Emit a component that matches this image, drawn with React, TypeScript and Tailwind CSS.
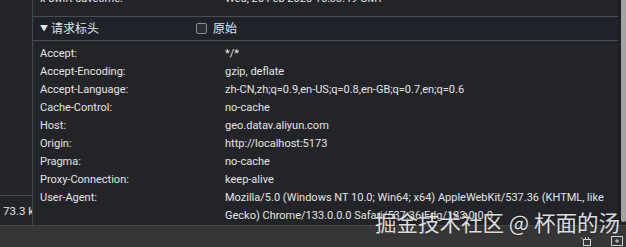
import React from "react";

const rows: [string, React.ReactNode][] = [
  ["Accept:", "*/*"],
  ["Accept-Encoding:", "gzip, deflate"],
  ["Accept-Language:", "zh-CN,zh;q=0.9,en-US;q=0.8,en-GB;q=0.7,en;q=0.6"],
  ["Cache-Control:", "no-cache"],
  ["Host:", "geo.datav.aliyun.com"],
  ["Origin:", "http://localhost:5173"],
  ["Pragma:", "no-cache"],
  ["Proxy-Connection:", "keep-alive"],
  [
    "User-Agent:",
    <>
      Mozilla/5.0 (Windows NT 10.0; Win64; x64) AppleWebKit/537.36 (KHTML, like
      <br />
      Gecko) Chrome/133.0.0.0 Safari/537.36 Edg/133.0.0.0
    </>,
  ],
];

export default function App() {
  return (
    <div
      className="relative w-[626px] h-[247px] overflow-hidden bg-[#222428] text-[#e4e4e4] text-[11px] leading-[18px]"
      style={{ fontFamily: 'Roboto, "Noto Sans CJK SC", sans-serif' }}
    >
      <div className="flex h-[226px] border-b border-[#45484c]">
        {/* left column */}
        <div className="w-[33px] flex flex-col justify-end border-r border-[#45484c] bg-[#222428]">
          <div className="h-[30px] border-t border-[#45484c] flex items-center pl-[3px] whitespace-nowrap overflow-hidden text-[11.5px]">
            73.3 k
          </div>
        </div>
        {/* main */}
        <div className="flex-1 flex">
          <div className="w-[585px] flex flex-col overflow-hidden">
            <div className="h-[17px] flex pl-[7px] whitespace-nowrap">
              <div className="w-[185px] -mt-[10px]">x-swift-savetime:</div>
              <div className="-mt-[10px]">Wed, 26 Feb 2025 15:33:49 GMT</div>
            </div>
            <div className="h-[26px] border-y border-[#4a4d51] bg-[#1e2229] flex items-center pl-[7px]">
              <div className="w-[156px] flex items-center">
                <span className="text-[8px] mr-[3px] leading-none">▼</span>
                <span className="text-[12px]">请求标头</span>
              </div>
              <div className="w-[11px] h-[11px] rounded-[2px] border border-[#8a8c8f] bg-[#2a2c30]" />
              <span className="ml-[6px] text-[12px]">原始</span>
            </div>
            <div className="pt-[4px] pl-[7px]">
              {rows.map(([k, v]) => (
                <div key={k} className="flex whitespace-nowrap">
                  <div className="w-[185px] shrink-0">{k}</div>
                  <div>{v}</div>
                </div>
              ))}
            </div>
          </div>
          <div className="w-[3px] bg-[#1d1f22]" />
          <div className="w-[5px] h-[222px] bg-[#a3a3a3] rounded-b-[3px]" />
        </div>
      </div>
      <div className="h-[21px] bg-[#363636] flex items-start justify-end gap-[19px] pr-[3px] pt-[10px]">
        <svg width="12" height="10" viewBox="0 0 12 10" fill="none" stroke="#d0d0d0" strokeWidth="1">
          <rect x="3.5" y="3.5" width="7" height="6" />
          <path d="M1 1.5 L3 3.5 M5.5 1 v2 M8.5 1 v2" />
        </svg>
        <svg width="12" height="10" viewBox="0 0 12 10" fill="none" stroke="#d0d0d0" strokeWidth="1">
          <rect x="0.5" y="0.5" width="11" height="9" />
          <path d="M4 5 h4 M6 3 v4" />
        </svg>
      </div>
      <div
        className="absolute left-[375px] top-[208px] text-[21.5px] leading-[28px] text-white/85 whitespace-nowrap"
        style={{ fontFamily: '"Noto Sans CJK SC", sans-serif', textShadow: "0 0 2px rgba(0,0,0,0.5)" }}
      >
        掘金技术社区 @ 杯面的汤
      </div>
    </div>
  );
}
